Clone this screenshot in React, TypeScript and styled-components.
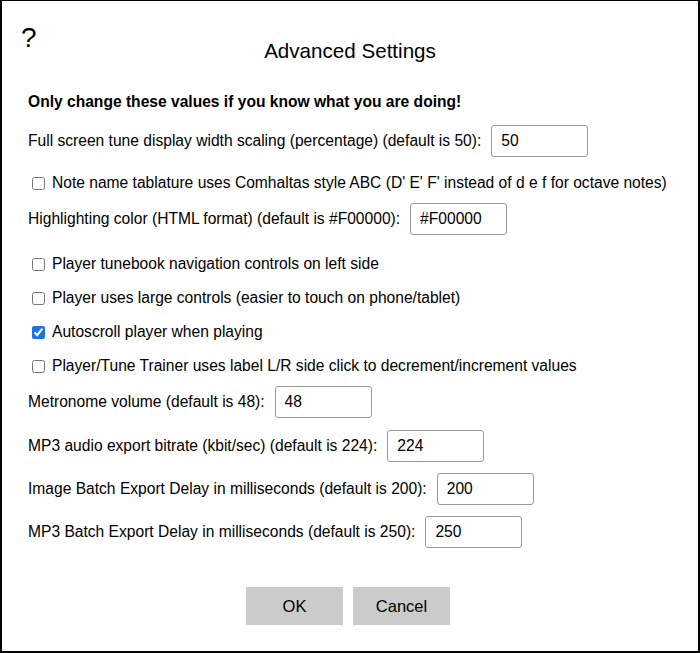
import React from "react";
import styled, { createGlobalStyle } from "styled-components";

const Global = createGlobalStyle`
  html, body { margin: 0; padding: 0; background: #fff; }
  body { font-family: "Liberation Sans", Arial, Helvetica, sans-serif; color: #000; }
  * { box-sizing: border-box; }
`;

const Dialog = styled.div`
  width: 700px;
  height: 653px;
  border: 2px solid #000;
  border-top-width: 1px;
  padding: 0 26px 0 26px;
  display: flex;
  flex-direction: column;
  font-size: 15.6px;
`;

const Header = styled.div`
  display: grid;
  grid-template-columns: 1fr auto 1fr;
  align-items: start;
`;

const Help = styled.div`
  font-size: 28px;
  line-height: 1;
  padding-top: 23px;
  margin-left: -7px;
  cursor: pointer;
`;

const Title = styled.h1`
  margin: 38px 0 0 0;
  font-size: 20.6px;
  font-weight: normal;
  line-height: 24px;
  text-align: center;
`;

const Warning = styled.div`
  margin-top: 30px;
  font-weight: bold;
  line-height: 18px;
`;

const Row = styled.div<{ $mt: number }>`
  display: flex;
  align-items: center;
  gap: 10px;
  margin-top: ${(p) => p.$mt}px;
  min-height: 18px;
  line-height: 18px;
`;

const CheckRow = styled.label<{ $mt: number }>`
  display: flex;
  align-items: center;
  margin-top: ${(p) => p.$mt}px;
  line-height: 18px;
  height: 18px;
`;

const Check = styled.input`
  width: 13px;
  height: 13px;
  margin: 0 7px 0 4px;
  accent-color: #1a73e8;
`;

const TextInput = styled.input`
  width: 97px;
  height: 32px;
  border: 1px solid #9a9a9a;
  border-radius: 3px;
  padding: 0 0 0 9px;
  font-family: inherit;
  font-size: 15.6px;
  color: #000;
  background: #fff;
`;

const Buttons = styled.div`
  display: flex;
  justify-content: center;
  gap: 10px;
  margin-top: 39px;
  margin-left: -4px;
`;

const Button = styled.button`
  width: 97px;
  height: 38px;
  border: none;
  background: #cbcbcb;
  font-family: inherit;
  font-size: 16.5px;
  color: #000;
  cursor: pointer;
`;

export default function App() {
  return (
    <>
      <Global />
      <Dialog>
        <Header>
          <Help>?</Help>
          <Title>Advanced Settings</Title>
          <div />
        </Header>
        <Warning>Only change these values if you know what you are doing!</Warning>
        <Row $mt={14}>
          <span>Full screen tune display width scaling (percentage) (default is 50):</span>
          <TextInput defaultValue="50" />
        </Row>
        <CheckRow $mt={17}>
          <Check type="checkbox" />
          Note name tablature uses Comhaltas style ABC (D' E' F' instead of d e f for octave notes)
        </CheckRow>
        <Row $mt={11}>
          <span>Highlighting color (HTML format) (default is #F00000):</span>
          <TextInput defaultValue="#F00000" />
        </Row>
        <CheckRow $mt={20}>
          <Check type="checkbox" />
          Player tunebook navigation controls on left side
        </CheckRow>
        <CheckRow $mt={16}>
          <Check type="checkbox" />
          Player uses large controls (easier to touch on phone/tablet)
        </CheckRow>
        <CheckRow $mt={16}>
          <Check type="checkbox" defaultChecked />
          Autoscroll player when playing
        </CheckRow>
        <CheckRow $mt={16}>
          <Check type="checkbox" />
          Player/Tune Trainer uses label L/R side click to decrement/increment values
        </CheckRow>
        <Row $mt={11}>
          <span>Metronome volume (default is 48):</span>
          <TextInput defaultValue="48" />
        </Row>
        <Row $mt={12}>
          <span>MP3 audio export bitrate (kbit/sec) (default is 224):</span>
          <TextInput defaultValue="224" />
        </Row>
        <Row $mt={11}>
          <span>Image Batch Export Delay in milliseconds (default is 200):</span>
          <TextInput defaultValue="200" />
        </Row>
        <Row $mt={11}>
          <span>MP3 Batch Export Delay in milliseconds (default is 250):</span>
          <TextInput defaultValue="250" />
        </Row>
        <Buttons>
          <Button>OK</Button>
          <Button>Cancel</Button>
        </Buttons>
      </Dialog>
    </>
  );
}
